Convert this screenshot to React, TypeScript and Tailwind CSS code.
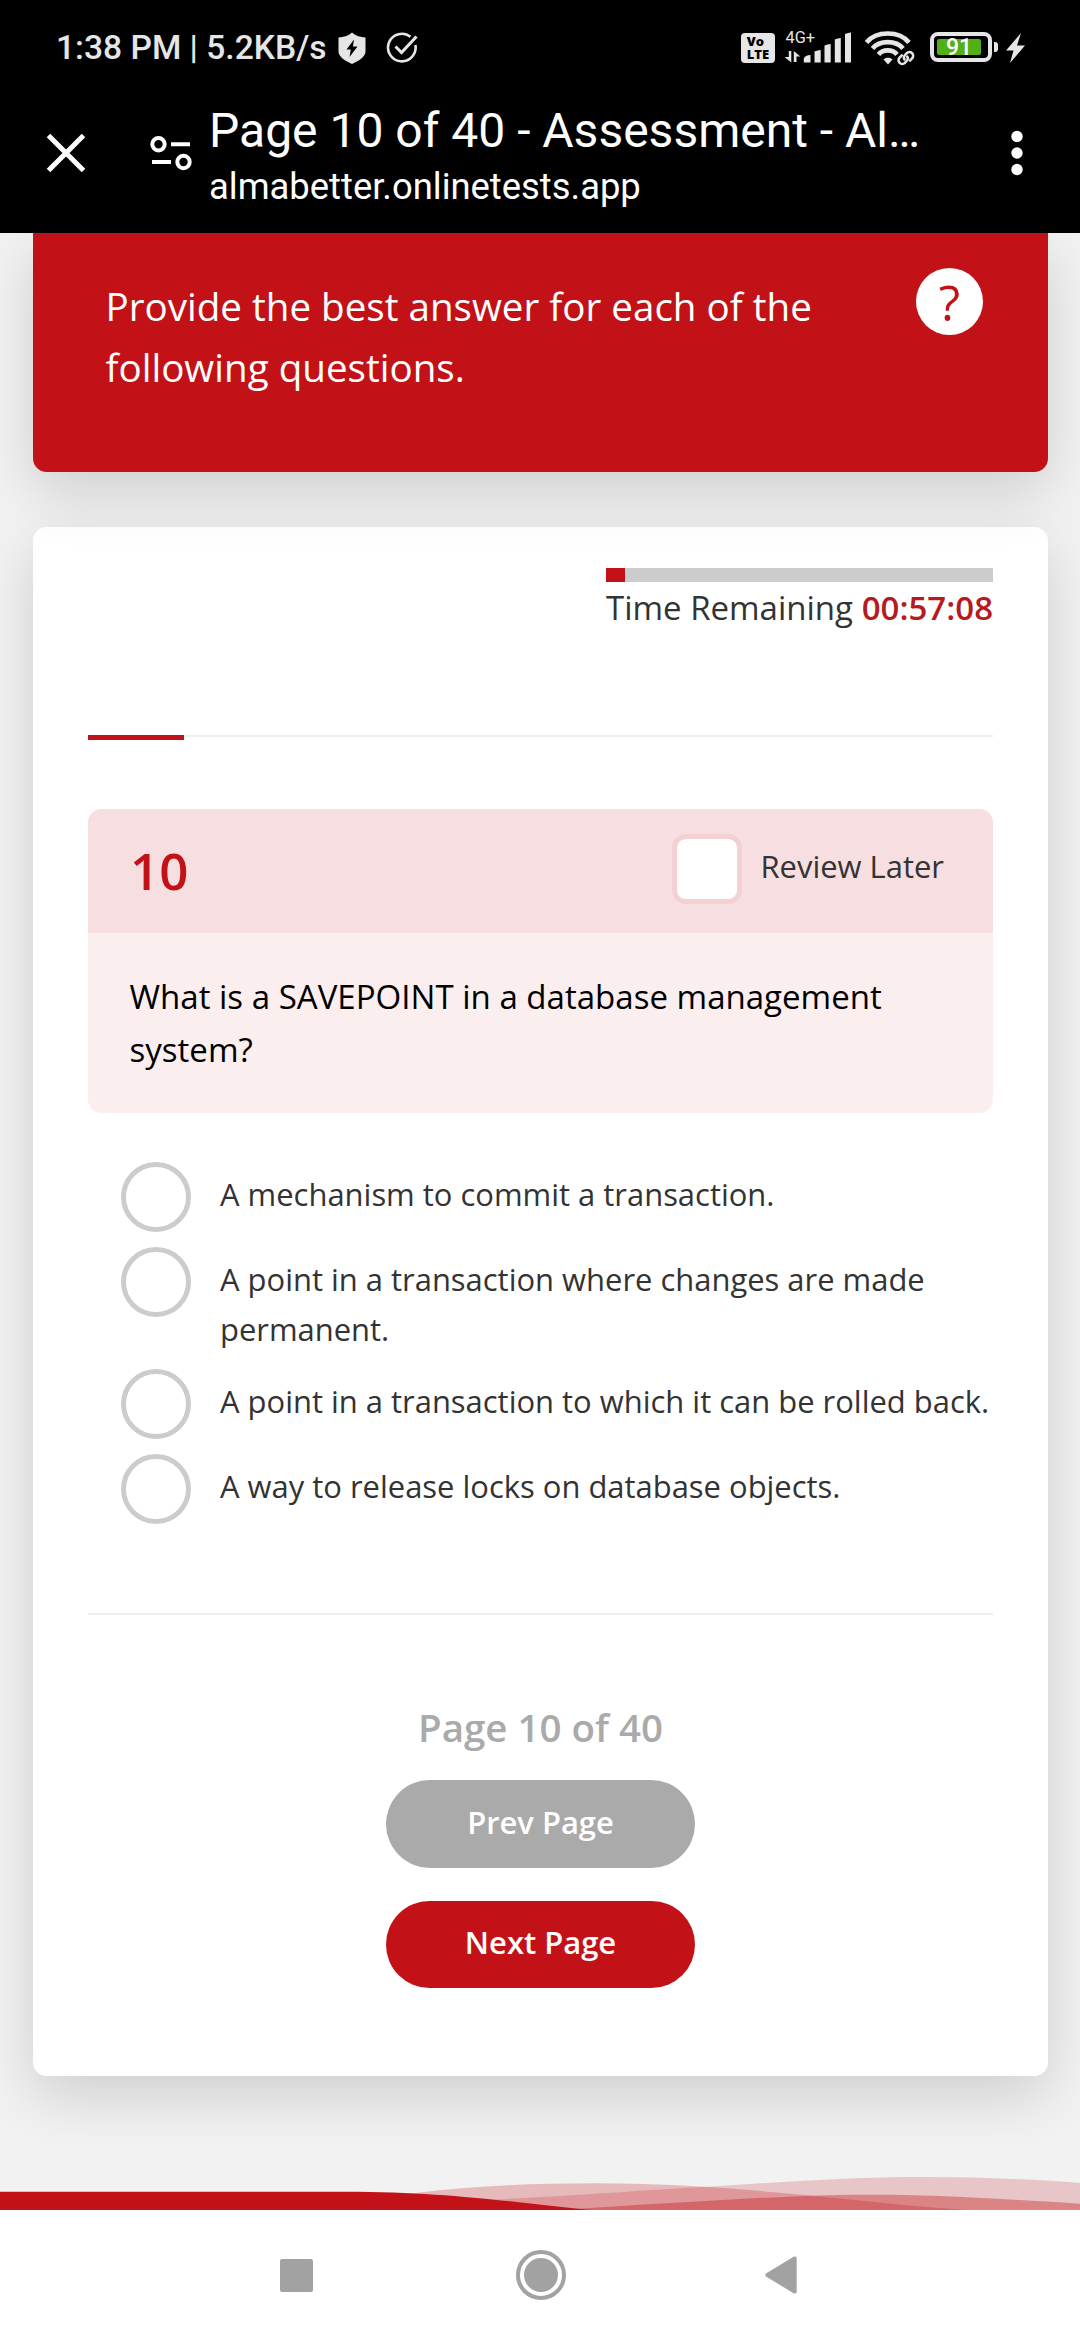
import React from "react";

const RED = "#c31217";

const options = [
  "A mechanism to commit a transaction.",
  "A point in a transaction where changes are made permanent.",
  "A point in a transaction to which it can be rolled back.",
  "A way to release locks on database objects.",
];

function StatusBar() {
  return (
    <div className="flex h-[94px] shrink-0 items-start justify-between pl-[56px] pr-[55px] pt-[29px] text-[#e6e6e6]">
      <div className="flex items-center pt-px">
        <span className="mt-px w-[282px] text-[33.600px] leading-[34px] font-medium whitespace-nowrap">1:38 PM | 5.2KB/s</span>
        <svg className="h-[34px] w-[28px]" viewBox="0 0 28 34">
          <path d="M14 1.5c4 3.5 8 4.500 13.500 5v14c0 5.500-7 9.500-13.500 12.500C7.500 30 .5 26 .5 20.500v-14C6 6 10 5 14 1.500z" fill="currentColor" />
          <path d="M16 8.500 8.500 18.500h4.300L11.500 26l8-10.500h-4.600z" fill="#000" />
        </svg>
        <svg className="ml-[20px] h-[34px] w-[33px]" viewBox="0 0 33 34" fill="none" stroke="currentColor" strokeWidth="2.600">
          <path d="M24.500 5.800A13.800 13.800 0 1 0 29.400 14" />
          <path d="M9.500 15.500l6 6L30.500 5.500" strokeWidth="3" />
        </svg>
      </div>
      <div className="flex items-center">
        <div className="-mt-px flex h-[30px] w-[34px] items-center justify-center rounded-[4px] bg-[#e6e6e6]">
          <span className="whitespace-pre-line font-['Open_Sans'] text-[13px] leading-[13px] font-extrabold text-black">{"Vo\nLTE"}</span>
        </div>
        <svg className="-mt-[2px] ml-[9px] h-[36px] w-[69px]" viewBox="784 29 69 36" fill="currentColor">
          <text x="785.500" y="43" fontSize="16" fontFamily="Roboto" textLength="29.500" lengthAdjust="spacingAndGlyphs">4G+</text>
          <path d="M788.800 51v6h-4.300l6.800 5.500V51zM793.800 62V51l6.500 5.500h-3.800V62z" />
          <path d="M803.800 62.500v-4c1-2 3-3.500 6.700-3.500v7.500zM814.500 62.500V51.500q3-1.500 6.200-1.500v12.500zM824.500 62.500V45.500q3-1.500 6.200-1.500v18.500zM834.800 62.500V39.500q3-1.500 6-1.500v24.500zM845 62.500V34q3-1.500 6-1.500v30z" />
        </svg>
        <svg className="ml-[11px] h-[38px] w-[52px]" viewBox="864 29 52 38" fill="none" stroke="currentColor">
          <path d="M866.500 42.500C876 30.500 899.500 30.500 909 42.500M872.500 48.500c7-8.500 23.500-8.500 30.500 0M878.500 54.500c4.500-5.500 14-5.500 18.500 0" strokeWidth="4.600" />
          <path d="M883.500 59.500c2-2.500 7-2.500 9 0l-4.500 5z" fill="currentColor" stroke="none" />
          <g strokeWidth="2.500" strokeLinecap="round">
            <path d="M904.500 59.500a3.700 3.700 0 0 1 .5-4.500l1.800-1.800a3.700 3.700 0 0 1 5.300 5.200l-2.200 2.200" />
            <path d="M907.200 56.500a3.700 3.700 0 0 1-.5 4.500l-1.800 1.800a3.700 3.700 0 0 1-5.300-5.200l2.200-2.200" />
          </g>
        </svg>
        <div className="-mt-[2px] ml-[14px] flex h-[30px] w-[62px] items-center rounded-[8px] border-[4px] border-[#e6e6e6] pl-[3px]">
          <div className="flex h-[16px] w-[44px] items-center justify-center rounded-[2px] bg-[#50b014] pt-[2px] text-[23px] leading-[16px] font-medium text-white">91</div>
        </div>
        <div className="-mt-[2px] ml-[2px] h-[10px] w-[4px] rounded-r-[3px] bg-[#e6e6e6]" />
        <svg className="-mt-px ml-[8px] h-[30px] w-[19px]" viewBox="0 0 19 30" fill="currentColor">
          <path d="M15 0 0 17.500h7.500L4 30 19 12.500h-8z" />
        </svg>
      </div>
    </div>
  );
}

function BrowserBar() {
  return (
    <div className="flex h-[139px] shrink-0 items-start text-white">
      <svg className="ml-[46px] mt-[39px] h-[40px] w-[40px]" viewBox="0 0 40 40" stroke="currentColor" strokeWidth="5">
        <path d="M2.500 2.500l35 35M37.500 2.500l-35 35" />
      </svg>
      <svg className="ml-[64px] mt-[41px] h-[36px] w-[43px]" viewBox="0 0 43 36" fill="none" stroke="currentColor" strokeWidth="4">
        <circle cx="8.500" cy="9.300" r="6.200" />
        <path d="M21 9.300h19M2 27h19" />
        <circle cx="33.500" cy="27" r="6.200" />
      </svg>
      <div className="ml-[16px] w-[724px]">
        <div className="truncate pt-[8px] text-[48px] leading-[57px]">Page 10 of 40 - Assessment - Al…</div>
        <div className="mt-[7px] text-[36.400px] leading-[42px] whitespace-nowrap">almabetter.onlinetests.app</div>
      </div>
      <svg className="ml-[78px] mt-[36px] h-[46px] w-[12px]" viewBox="0 0 12 46" fill="currentColor">
        <circle cx="6" cy="6.500" r="5.700" />
        <circle cx="6" cy="23" r="5.700" />
        <circle cx="6" cy="39.500" r="5.700" />
      </svg>
    </div>
  );
}

function Waves() {
  return (
    <svg className="mt-auto h-[35px] w-[1080px] shrink-0" viewBox="0 2175 1080 35">
      <path d="M490 2199.700C590 2195 660 2189 702 2187C790 2181.500 850 2177 925 2177C980 2177 1035 2179.500 1080 2183V2210H490Z" fill={RED} fillOpacity="0.200" />
      <path d="M400 2195C450 2187.500 520 2183.300 595 2183.300C680 2183.300 750 2190 805 2195C860 2200.500 920 2207 968 2210H400Z" fill={RED} fillOpacity="0.255" />
      <path d="M560 2210C640 2205 730 2199 805 2196C890 2193 960 2196 1080 2203.700V2210Z" fill={RED} fillOpacity="0.360" />
      <path d="M0 2191.700H345C450 2192 510 2202 590 2210H0Z" fill={RED} />
    </svg>
  );
}

function NavBar() {
  return (
    <div className="flex h-[130px] shrink-0 items-center bg-white text-[#a2a2a2]">
      <div className="ml-[280px] h-[33px] w-[33px] rounded-[2px] bg-[#a2a2a2]" />
      <div className="ml-[203px] flex h-[50px] w-[50px] items-center justify-center rounded-full border-[4px] border-[#a2a2a2]">
        <div className="h-[34px] w-[34px] rounded-full bg-[#a2a2a2]" />
      </div>
      <svg className="ml-[199px] h-[38px] w-[32px]" viewBox="0 0 32 38" fill="currentColor">
        <path d="M1 17.500 28.500.8Q31.700-.5 31.700 2.500v33Q31.700 38.500 28.500 37.200L1 20.500Q-.3 19 1 17.500z" />
      </svg>
    </div>
  );
}

export default function App() {
  return (
    <div className="flex h-[2340px] w-[1080px] flex-col overflow-hidden bg-[#f2f2f2] font-['Open_Sans',sans-serif] text-[#333]">
      <header className="relative z-20 flex h-[233px] shrink-0 flex-col bg-black font-['Roboto',sans-serif]">
        <StatusBar />
        <BrowserBar />
      </header>

      <section className="relative z-10 ml-[33px] mr-[32px] flex h-[239px] shrink-0 items-start justify-between rounded-b-[13.750px] bg-[#c31217] pl-[72.500px] pr-[65px] text-white shadow-[0_20px_58px_rgba(0,0,0,0.150)]">
        <p className="mt-[43px] w-[760px] text-[38.600px] leading-[61.400px]">Provide the best answer for each of the following questions.</p>
        <div className="mt-[35px] flex h-[67px] w-[67px] items-center justify-center rounded-full bg-white text-[49.500px] leading-[66px] text-[#c31217]">?</div>
      </section>

      <main className="ml-[33px] mr-[32px] mt-[55px] flex h-[1549px] shrink-0 flex-col rounded-[13.750px] bg-white px-[55px] shadow-[0_20px_58px_rgba(0,0,0,0.150)]">
        <div className="mt-[41px] w-[387px] self-end">
          <div className="h-[14px] bg-[#ccc]">
            <div className="h-full w-[19px] bg-[#c31217]" />
          </div>
          <p className="flex justify-between text-[33px] leading-[51px] whitespace-nowrap">
            <span>Time Remaining</span>
            <span className="font-semibold text-[#b51a1e]">00:57:08</span>
          </p>
        </div>

        <div className="mt-[102px] h-[5px]">
          <div className="h-[2px] bg-[#eee]">
            <div className="h-[5px] w-[96px] bg-[#c31217]" />
          </div>
        </div>

        <div className="mt-[69px] h-[304px] overflow-hidden rounded-[13.750px] bg-[#faeeee]">
          <div className="flex h-[124px] items-center bg-[#f7dfe1] pl-[42px] pr-[49px]">
            <span className="-mt-[3px] text-[51px] leading-[60px] font-semibold text-[#c31217]">10</span>
            <span className="-mt-[4px] ml-auto h-[70px] w-[70px] rounded-[13.750px] border-[5px] border-[#f3d0d2] bg-white" />
            <span className="-mt-[10px] ml-[19px] text-[30.940px] leading-[42px]">Review Later</span>
          </div>
          <p className="mt-[36.500px] px-[41.500px] text-[33.050px] leading-[53px] text-black">What is a SAVEPOINT in a database management system?</p>
        </div>

        <ul className="mt-[49px] ml-[33px] flex flex-col">
          {options.map((o, i) => (
            <li key={o} className={i === 1 ? "flex h-[122px]" : "flex h-[85px]"}>
              <span className="h-[70px] w-[70px] shrink-0 rounded-full border-[5px] border-[#ccc]" />
              <span className="mt-[6.500px] -mr-[10px] ml-[29px] w-[782px] shrink-0 text-[30.940px] leading-[50px]">{o}</span>
            </li>
          ))}
        </ul>

        <div className="mt-[74px] h-[2px] bg-[#eee]" />

        <div className="mt-[81px] flex flex-col items-center font-semibold">
          <p className="text-[38.500px] leading-[62px] text-[#aaa]">Page 10 of 40</p>
          <button className="mt-[22px] h-[88px] w-[309px] rounded-full bg-[#aaa] pb-[4px] text-[30.940px] text-white">Prev Page</button>
          <button className="mt-[33px] h-[87px] w-[309px] rounded-full bg-[#c31217] pb-[5px] text-[30.940px] text-white">Next Page</button>
        </div>
      </main>

      <Waves />
      <NavBar />
    </div>
  );
}
